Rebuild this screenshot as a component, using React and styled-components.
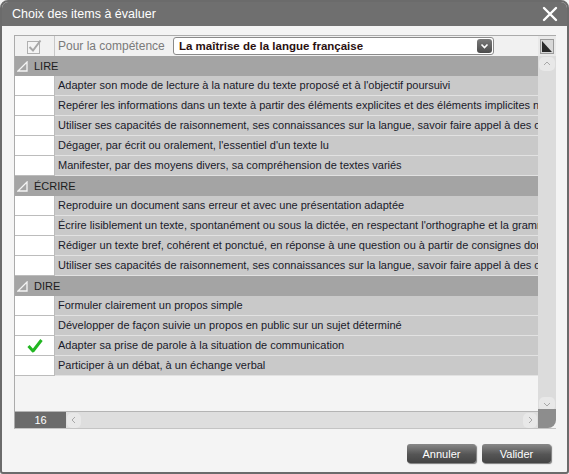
import React from 'react';
import styled, { createGlobalStyle } from 'styled-components';

const Global = createGlobalStyle`
    html, body { margin: 0; padding: 0; background: #f4f4f4; }
    body { font-family: "Liberation Sans", Arial, sans-serif; overflow: hidden; }
`

const Dialog = styled.div`
    width: 569px;
    height: 474px;
    box-sizing: border-box;
    border: 2px solid #6b6b6b;
    border-radius: 8px 8px 3px 3px;
    background: #f4f4f4;
    display: flex;
    flex-direction: column;
    overflow: hidden;
`

const TitleBar = styled.div`
    height: 24px;
    flex: none;
    background: #6f6f6f;
    color: #fff;
    display: flex;
    align-items: center;
    justify-content: space-between;
    padding: 0 9px 0 10px;
    font-size: 12.5px;
`

const Main = styled.div`
    padding: 9px 11px 0 12px;
`

const Panel = styled.div`
    display: grid;
    grid-template-columns: 1fr 18px;
    grid-template-rows: 20px 355px 17px;
    border-top: 1px solid #ababab;
    border-left: 1px solid #ababab;
    border-bottom: 1px solid #c4c4c4;
`

const HeaderRow = styled.div`
    display: flex;
    align-items: center;
    background: #f1f1f1;
    font-size: 12px;
    color: #7a7a7a;
`

const CheckCol = styled.div`
    width: 40px;
    height: 100%;
    flex: none;
    display: flex;
    align-items: center;
    justify-content: center;
    box-sizing: border-box;
    border-right: 1px solid ${p => p.$head ? '#c8c8c8' : '#bcbcbc'};
    border-bottom: ${p => p.$head ? 'none' : '1px solid #bcbcbc'};
    background: ${p => p.$head ? 'transparent' : '#fff'};
`

const HeadLabel = styled.span`
    padding-left: 3px;
    width: 115px;
    flex: none;
`

const Select = styled.div`
    width: 321px;
    height: 18px;
    box-sizing: border-box;
    border: 1px solid #8a8a8a;
    border-radius: 3px;
    background: #fff;
    display: flex;
    align-items: center;
    justify-content: space-between;
    padding: 0 1px 0 5px;
    font-size: 11.5px;
    font-weight: bold;
    color: #2a1010;
`

const DropButton = styled.div`
    width: 15px;
    height: 14px;
    border-radius: 3px;
    background: linear-gradient(#7a7a7a, #4c4c4c);
    display: flex;
    align-items: center;
    justify-content: center;
`

const Body = styled.div`
    overflow: hidden;
    background: #f4f4f4;
`

const GroupRow = styled.div`
    height: 20px;
    display: flex;
    align-items: center;
    background: #a4a4a4;
    font-size: 11px;
    color: #1c1c1c;
    padding-left: 2px;
    gap: 6px;
    box-sizing: border-box;
`

const ItemRow = styled.div`
    height: 20px;
    display: flex;
`

const ItemText = styled.div`
    flex: 1;
    min-width: 0;
    background: #c9c9c9;
    border-bottom: 1px solid #e2e2e2;
    box-sizing: border-box;
    padding-left: 3px;
    font-size: 11px;
    color: #1a1a2a;
    line-height: 19px;
    white-space: nowrap;
    overflow: hidden;
`

const VCorner = styled.div`
    background: #e9e9e9;
    display: flex;
    align-items: center;
    justify-content: center;
`

const CornerBox = styled.div`
    width: 14px;
    height: 15px;
    box-sizing: border-box;
    border: 1px solid #9a9a9a;
    background: #d8d8d8;
    display: flex;
    align-items: flex-end;
    justify-content: flex-end;
`

const VTrack = styled.div`
    background: #dcdcdc;
    display: flex;
    flex-direction: column;
    justify-content: space-between;
    padding: 1px 1px 0 1px;
`

const ArrowButton = styled.div`
    flex: none;
    height: ${p => p.$h ? '15px' : '14px'};
    width: ${p => p.$h ? '14px' : '100%'};
    border-radius: 5px;
    background: #e8e8e8;
    display: flex;
    align-items: center;
    justify-content: center;
`

const Footer = styled.div`
    display: flex;
    border-top: 1px solid #b4b4b4;
`

const Count = styled.div`
    width: 51px;
    background: #6b6b6b;
    color: #fff;
    font-size: 11px;
    display: flex;
    align-items: center;
    justify-content: center;
`

const HTrack = styled.div`
    flex: 1;
    background: #dedede;
    display: flex;
    justify-content: space-between;
    align-items: center;
    padding: 0 1px;
`

const Corner = styled.div`
    background: #8d8d8d;
    border-bottom-right-radius: 8px;
    margin-top: -2px;
`

const Buttons = styled.div`
    display: flex;
    justify-content: flex-end;
    gap: 6px;
    padding: 15px 5px 0 0;
`

const Button = styled.button`
    width: 69px;
    height: 19px;
    border: none;
    border-radius: 3px;
    background: linear-gradient(#888, #555 55%, #444);
    box-shadow: 1px 1px 1px rgba(0,0,0,0.5);
    color: #fff;
    font-family: "Liberation Sans", Arial, sans-serif;
    font-size: 11px;
    padding: 0;
`

const groups = [
    { name: 'LIRE', items: [
        "Adapter son mode de lecture à la nature du texte proposé et à l'objectif poursuivi",
        "Repérer les informations dans un texte à partir des éléments explicites et des éléments implicites nécessaires",
        "Utiliser ses capacités de raisonnement, ses connaissances sur la langue, savoir faire appel à des outils appropriés pour lire",
        "Dégager, par écrit ou oralement, l'essentiel d'un texte lu",
        "Manifester, par des moyens divers, sa compréhension de textes variés",
    ]},
    { name: 'ÉCRIRE', items: [
        "Reproduire un document sans erreur et avec une présentation adaptée",
        "Écrire lisiblement un texte, spontanément ou sous la dictée, en respectant l'orthographe et la grammaire",
        "Rédiger un texte bref, cohérent et ponctué, en réponse à une question ou à partir de consignes données",
        "Utiliser ses capacités de raisonnement, ses connaissances sur la langue, savoir faire appel à des outils variés",
    ]},
    { name: 'DIRE', items: [
        "Formuler clairement un propos simple",
        "Développer de façon suivie un propos en public sur un sujet déterminé",
        "Adapter sa prise de parole à la situation de communication",
        "Participer à un débat, à un échange verbal",
    ]},
]

const checked = ["Adapter sa prise de parole à la situation de communication"]

const Chevron = ({ dir }) => {
    const pts = {
        up: '2,6 5,3 8,6',
        down: '2,4 5,7 8,4',
        left: '6,2 3,5 6,8',
        right: '4,2 7,5 4,8',
    }[dir]
    return (
        <svg width="10" height="10" viewBox="0 0 10 10">
            <polyline points={pts} fill="none" stroke="#a8a8a8" strokeWidth="1" />
        </svg>
    )
}

function App() {
    return (
    <>
        <Global />
        <Dialog>
            <TitleBar>
                <span>Choix des items à évaluer</span>
                <svg width="16" height="16" viewBox="0 0 16 16">
                    <path d="M2 2 L14 14 M14 2 L2 14" stroke="#fff" strokeWidth="2.4" strokeLinecap="round" />
                </svg>
            </TitleBar>

            <Main>
                <Panel>
                    <HeaderRow>
                        <CheckCol $head>
                            <svg width="15" height="15" viewBox="0 0 15 15">
                                <rect x="0.5" y="2.5" width="12" height="12" fill="#f4f4f4" stroke="#b0b0b0" />
                                <path d="M2.5 8 L6 11.5 L13.5 1.5" fill="none" stroke="#a8a8a8" strokeWidth="2" />
                            </svg>
                        </CheckCol>
                        <HeadLabel>Pour la compétence</HeadLabel>
                        <Select>
                            <span>La maîtrise de la langue française</span>
                            <DropButton>
                                <svg width="9" height="6" viewBox="0 0 9 6">
                                    <polyline points="1.5,1.5 4.5,4.5 7.5,1.5" fill="none" stroke="#fff" strokeWidth="1.6" />
                                </svg>
                            </DropButton>
                        </Select>
                    </HeaderRow>

                    <VCorner>
                        <CornerBox>
                            <svg width="12" height="13" viewBox="0 0 12 13">
                                <polygon points="1,1 11,12 1,12" fill="#2a2a2a" />
                            </svg>
                        </CornerBox>
                    </VCorner>

                    <Body>
                        {groups.map(g => (
                            <React.Fragment key={g.name}>
                                <GroupRow>
                                    <svg width="11" height="11" viewBox="0 0 11 11">
                                        <polygon points="1,10 10,1 10,10" fill="none" stroke="#f4f4f4" strokeWidth="1.3" />
                                    </svg>
                                    <span>{g.name}</span>
                                </GroupRow>
                                {g.items.map(item => (
                                    <ItemRow key={item}>
                                        <CheckCol>
                                            {checked.includes(item) && (
                                                <svg width="16" height="15" viewBox="0 0 16 15">
                                                    <path d="M1.5 8 L6 13 L14.5 2" fill="none" stroke="#22b622" strokeWidth="3" strokeLinejoin="round" />
                                                </svg>
                                            )}
                                        </CheckCol>
                                        <ItemText>{item}</ItemText>
                                    </ItemRow>
                                ))}
                            </React.Fragment>
                        ))}
                    </Body>

                    <VTrack>
                        <ArrowButton><Chevron dir="up" /></ArrowButton>
                        <ArrowButton><Chevron dir="down" /></ArrowButton>
                    </VTrack>

                    <Footer>
                        <Count>16</Count>
                        <HTrack>
                            <ArrowButton $h><Chevron dir="left" /></ArrowButton>
                            <ArrowButton $h><Chevron dir="right" /></ArrowButton>
                        </HTrack>
                    </Footer>
                    <Corner />
                </Panel>

                <Buttons>
                    <Button>Annuler</Button>
                    <Button>Valider</Button>
                </Buttons>
            </Main>
        </Dialog>
    </>
    );
}

export default App;
